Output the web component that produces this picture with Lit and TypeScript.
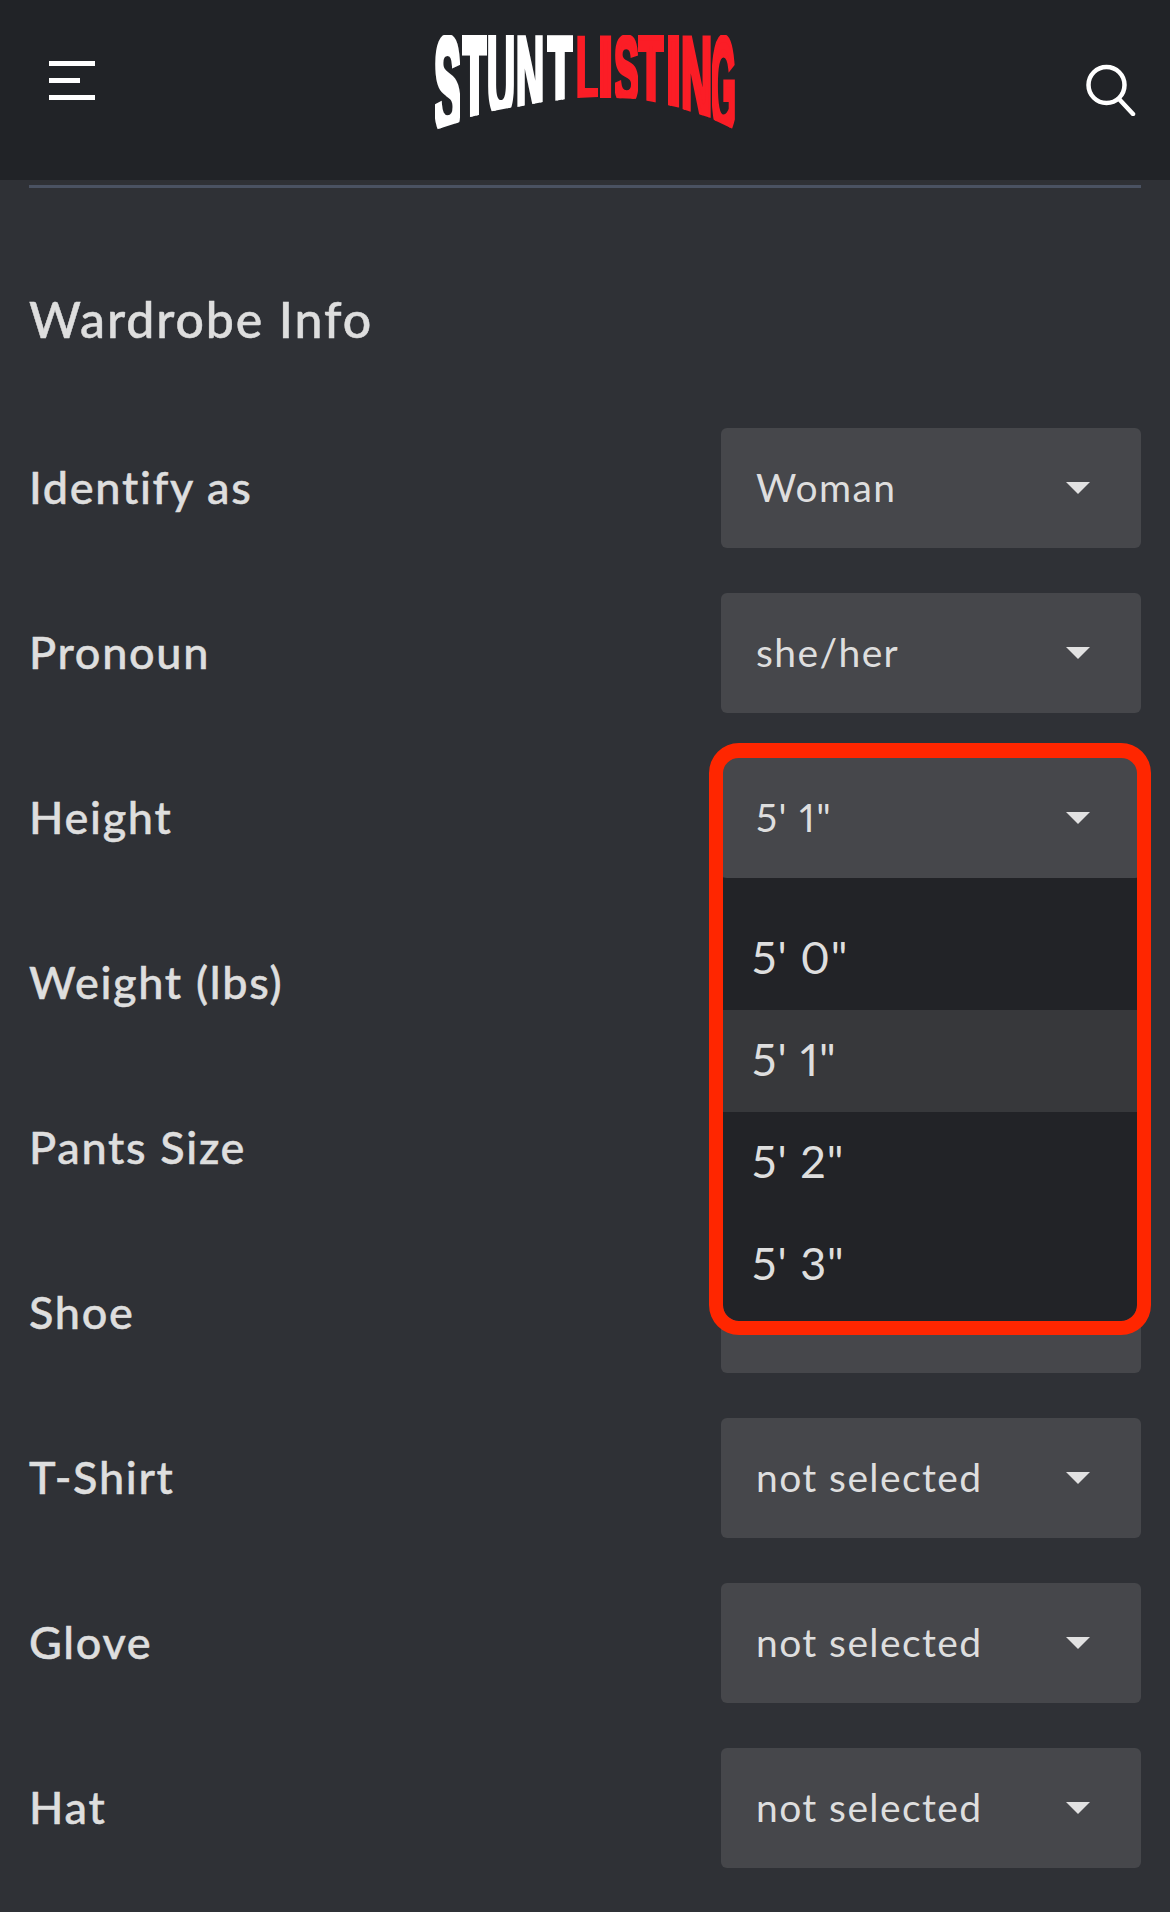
import { LitElement, html, css, svg } from "lit";
import { customElement } from "lit/decorators.js";

const LOGO = [
  { c: "S", x: 0, w: 25, a: 0.667, l: 95, r: 87, f: "#fff" },
  { c: "T", x: 27, w: 25, a: 0.611, l: 84, r: 78, f: "#fff" },
  { c: "U", x: 53, w: 26, a: 0.722, l: 77, r: 72, f: "#fff" },
  { c: "N", x: 82, w: 26, a: 0.722, l: 72, r: 67, f: "#fff" },
  { c: "T", x: 112, w: 26, a: 0.611, l: 67, r: 63, f: "#fff" },
  { c: "L", x: 142, w: 21, a: 0.611, l: 63, r: 62, f: "#fb1d26" },
  { c: "I", x: 164, w: 14, a: 0.278, l: 63, r: 63, f: "#fb1d26" },
  { c: "S", x: 180, w: 23, a: 0.667, l: 63, r: 64, f: "#fb1d26" },
  { c: "T", x: 203, w: 26, a: 0.611, l: 64, r: 69, f: "#fb1d26" },
  { c: "I", x: 232, w: 14, a: 0.278, l: 70, r: 73, f: "#fb1d26" },
  { c: "N", x: 247, w: 29, a: 0.722, l: 74, r: 83, f: "#fb1d26" },
  { c: "G", x: 277, w: 23, a: 0.778, l: 84, r: 95, f: "#fb1d26" },
];

const ROWS = [
  { label: "Identify as", value: "Woman" },
  { label: "Pronoun", value: "she/her" },
  { label: "Height", value: `5' 1"`, open: true },
  { label: "Weight (lbs)", value: "not selected" },
  { label: "Pants Size", value: "not selected" },
  { label: "Shoe", value: "not selected" },
  { label: "T-Shirt", value: "not selected" },
  { label: "Glove", value: "not selected" },
  { label: "Hat", value: "not selected" },
];

const OPTIONS = [`5' 0"`, `5' 1"`, `5' 2"`, `5' 3"`];

@customElement("app-root")
export class AppRoot extends LitElement {
  static styles = css`
    :host {
      display: block;
      width: 1170px;
      height: 1912px;
      overflow: hidden;
      background: #2f3136;
      font-family: Lato, "Noto Sans", sans-serif;
      font-variant-ligatures: none;
      font-variant-numeric: proportional-nums;
      color: #dedede;
    }
    .header {
      height: 180px;
      background: #212327;
      display: flex;
      box-sizing: border-box;
      padding: 35px 34px 0 49px;
      align-items: flex-start;
    }
    .burger {
      display: flex;
      flex-direction: column;
      gap: 12px;
      margin-top: 26px;
      width: 46px;
    }
    .burger i { display: block; height: 5px; width: 46px; background: #fff; }
    .burger i:nth-child(2) { width: 31px; }
    .logo { display: block; width: 300px; height: 95px; margin-left: 340px; }
    .logo text {
      font-family: "Liberation Sans", Arial, sans-serif;
      font-weight: 700;
      font-size: 100px;
      stroke-width: 6px;
      stroke-linejoin: miter;
    }
    .search { margin: 29px 0 0 auto; display: block; }
    .rule {
      height: 3px;
      margin: 5px 29px 0;
      background: #4a5262;
    }
    h2 {
      margin: 0;
      padding: 100px 29px 0;
      font-size: 50px;
      font-weight: 500;
      letter-spacing: 1.9px;
      -webkit-text-stroke: 0.5px #dedede;
      line-height: 62px;
      height: 240px;
      box-sizing: border-box;
    }
    .rows {
      display: flex;
      flex-direction: column;
      gap: 45px;
      padding: 0 29px;
    }
    .row {
      display: flex;
      justify-content: space-between;
      align-items: center;
      height: 120px;
    }
    .label {
      font-size: 45px;
      font-weight: 500;
      letter-spacing: 1.7px;
      -webkit-text-stroke: 0.5px #dedede;
      padding-bottom: 3px;
    }
    .field { position: relative; width: 420px; height: 120px; }
    .select {
      display: flex;
      align-items: center;
      justify-content: space-between;
      box-sizing: border-box;
      height: 120px;
      padding: 0 51px 0 35px;
      background: #46474b;
      border-radius: 6px;
      font-size: 39px;
      letter-spacing: 1.4px;
    }
    .select span:first-child { padding-bottom: 2px; }
    .arrow {
      width: 0;
      height: 0;
      border-left: 12px solid transparent;
      border-right: 12px solid transparent;
      border-top: 12px solid #e2e2e2;
    }
    .menu {
      position: absolute;
      left: 2px;
      top: 120px;
      width: 414px;
      height: 443px;
      box-sizing: border-box;
      padding-top: 30px;
      background: #222327;
      border-radius: 0 0 16px 16px;
      font-size: 45px;
      letter-spacing: 1px;
      z-index: 2;
    }
    .option {
      height: 102px;
      box-sizing: border-box;
      display: flex;
      align-items: center;
      padding: 0 0 4px 29px;
    }
    .option.active { background: #37383b; }
    .callout {
      position: absolute;
      left: -12px;
      top: -15px;
      width: 442px;
      height: 592px;
      box-sizing: border-box;
      border: 14.5px solid #ff2600;
      border-top-width: 15px;
      border-radius: 30px;
      z-index: 3;
      pointer-events: none;
    }
  `;

  private logo() {
    return html`<svg class="logo" viewBox="0 0 300 95" aria-label="Stunt Listing">
      <defs>
        ${LOGO.map(
          (g, i) => svg`<clipPath id=${"lc" + i}>
            <polygon points="${g.x},0 ${g.x + g.w},0 ${g.x + g.w},${g.r} ${g.x},${g.l}"></polygon>
          </clipPath>`
        )}
      </defs>
      ${LOGO.map((g, i) => {
        const sx = (g.w / (g.a * 100)) * 1.08;
        const h = Math.max(g.l, g.r) + 3;
        const sy = h / 72;
        return svg`<g clip-path=${`url(#lc${i})`}>
          <text transform="translate(${g.x - 1} ${h}) scale(${sx} ${sy})" fill=${g.f} stroke=${g.f}>${g.c}</text>
        </g>`;
      })}
    </svg>`;
  }

  render() {
    return html`
      <header class="header">
        <div class="burger"><i></i><i></i><i></i></div>
        ${this.logo()}
        <svg class="search" width="50" height="52" viewBox="0 0 50 52" fill="none" stroke="#fff" stroke-width="4.5" stroke-linecap="round">
          <circle cx="20.5" cy="21" r="18"></circle>
          <path d="M33 35 L47 50"></path>
        </svg>
      </header>
      <div class="rule"></div>
      <h2>Wardrobe Info</h2>
      <div class="rows">
        ${ROWS.map(
          (r) => html`<div class="row">
            <div class="label">${r.label}</div>
            <div class="field">
              <div class="select"><span>${r.value}</span><span class="arrow"></span></div>
              ${r.open
                ? html`<div class="menu">
                      ${OPTIONS.map(
                        (o) => html`<div class="option ${o === r.value ? "active" : ""}">${o}</div>`
                      )}
                    </div>
                    <div class="callout"></div>`
                : ""}
            </div>
          </div>`
        )}
      </div>
    `;
  }
}
